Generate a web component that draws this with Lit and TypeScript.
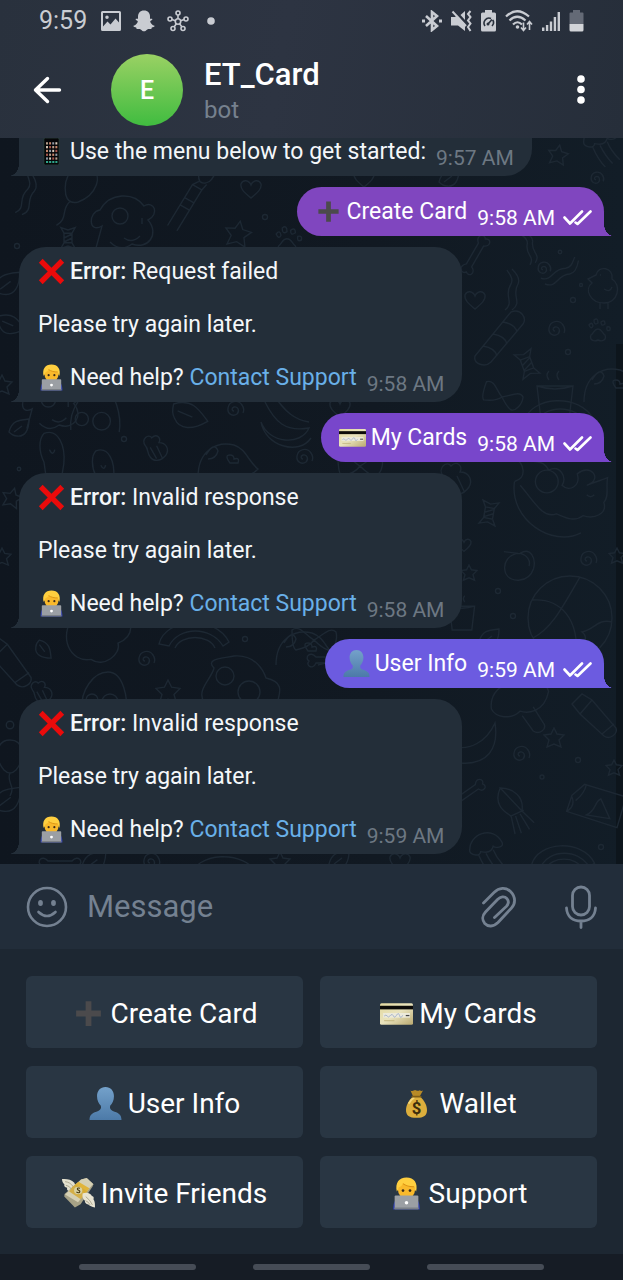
import { LitElement, html, svg, css, nothing, TemplateResult } from "lit";
import { customElement, property } from "lit/decorators.js";

type EmojiName = "plus" | "card" | "person" | "bag" | "money" | "tech" | "cross" | "phone";

const emojiArt: Record<EmojiName, TemplateResult> = {
  plus: svg`<path d="M13.200 4h5.600v9.200H28v5.600h-9.200V28h-5.600v-9.200H4v-5.600h9.200z" fill="#4b4a4c"/>`,
  cross: svg`<path d="M5.500 1 16 11.500 26.500 1 31 5.500 20.500 16 31 26.500 26.500 31 16 20.500 5.500 31 1 26.500 11.500 16 1 5.500z" fill="#ea0b0b"/>`,
  card: svg`
    <defs><linearGradient id="gold" x1="0" y1="0" x2="1" y2="1">
      <stop offset="0" stop-color="#e3d9a0"/><stop offset=".5" stop-color="#e9e3bd"/><stop offset="1" stop-color="#b9a970"/>
    </linearGradient></defs>
    <rect x="0" y="6" width="32" height="21" rx="1.500" fill="url(#gold)"/>
    <rect x="0" y="8.500" width="32" height="3.500" fill="#0c0b08"/>
    <rect x="3" y="15.500" width="26" height="4.500" fill="#eceadb"/>
    <path d="M4 18.500q2-2 3 0t3-.5 3 .3 3-.6 3 .4 3-.4" fill="none" stroke="#9aa9c8" stroke-width=".8"/>
    <path d="M25 18h3.500" stroke="#444" stroke-width="1.200"/>
    <path d="M4 23h10" stroke="#c3b67f" stroke-width="1"/>`,
  person: svg`
    <defs><linearGradient id="bust" x1="0" y1="0" x2="0" y2="1">
      <stop offset="0" stop-color="#74a1ca"/><stop offset="1" stop-color="#4c7aa8"/>
    </linearGradient></defs>
    <path d="M16 0c5 0 8.200 3.600 8.200 9 0 4-1.600 7.300-3.700 9.300-.6 2.600.4 4 2.500 4.900 5 1.800 8.500 2.800 8.500 8.800h-31c0-6 3.500-7 8.500-8.800 2.100-.9 3.100-2.300 2.500-4.900C9.400 16.300 7.800 13 7.800 9c0-5.400 3.200-9 8.200-9z" fill="url(#bust)"/>`,
  tech: svg`
    <path d="M3 31.500c0-7 2.500-10.500 6-12.500h14c3.500 2 6 5.500 6 12.500z" fill="#2f3fae"/>
    <ellipse cx="16" cy="12" rx="8.300" ry="9.500" fill="#f9b92b"/>
    <path d="M6.600 14C4.800 6 8.500.5 16 .5S27.200 6 25.400 14c-1-.8-1.500-2.500-2-4.600C19.500 9.500 15 8.500 12.500 6.500 11.500 8.500 9.600 9.600 8.600 10c-.3 1.600-.9 3.200-2 4z" fill="#ffcf3f"/>
    <path d="M12.500 6.500C15 8.500 19.500 9.500 23.400 9.400" fill="none" stroke="#d98f12" stroke-width="1"/>
    <circle cx="12.600" cy="13.200" r="1.300" fill="#3b2a1a"/><circle cx="19.400" cy="13.200" r="1.300" fill="#3b2a1a"/>
    <rect x="4.500" y="18" width="23" height="12.500" rx="1" fill="#9b9fa4"/>
    <rect x="4" y="29.500" width="24" height="2" rx="1" fill="#7b8087"/>
    <circle cx="16" cy="25" r="1.700" fill="#fff"/>`,
  bag: svg`
    <g transform="translate(1.600 2) scale(.9)">
      <path d="M9.500 1.500c2 1.200 3.500.2 5-.4 1.600 1 3.400 1 5 .1 1 .9 2.300 1 3.500.4l-3.800 6.600h-6.700z" fill="#b88a26"/>
      <path d="M12.500 8h7c4.500 3.500 7.800 9.500 7.800 14.500 0 6-3.300 8.500-11.300 8.500S4.700 28.500 4.700 22.500C4.700 17.500 8 11.500 12.500 8z" fill="#dcae3c"/>
      <path d="M8 15q2.500-4 5-5.500" stroke="#f4d67b" stroke-width="2" fill="none" stroke-linecap="round"/>
      <path d="M11.500 8.200h9" stroke="#7e5c17" stroke-width="1.800" stroke-linecap="round"/>
      <text x="16" y="27" text-anchor="middle" font-family="Roboto, sans-serif" font-weight="700" font-size="18" fill="#3c2d0c">$</text>
    </g>`,
  money: svg`
    <path d="M0 2c4-.3 9 0 12 3.500l2 6-6 3.500C5 13.500 4.500 12 5 10.500 2.500 10 1.800 8.400 2.300 7 .8 6 0 4 0 2z" fill="#e4e1cf"/>
    <path d="M3 4.500q5 .5 8 5M3.800 8q3.500.5 5.500 4" stroke="#a9a48d" stroke-width=".9" fill="none"/>
    <path d="M18.500 2.500 24 1l6.500 6-1 2.500-11.500 17-5.500 3L2.200 19l.3-2.500z" fill="#a7a286"/>
    <path d="M18.500 2.500 24 1l6.500 6-1 .6L15.500 24.500 3 17z" fill="#d5d0b4"/>
    <path d="m12 8 4-3.500L26.500 11l-3.800 5.500z" fill="#e0b43a"/>
    <path d="M10 9.500 13.500 7l11 7-6.300 7.500L7 14z" fill="#d4a935" opacity=".85"/>
    <ellipse cx="15.700" cy="13" rx="4" ry="3.500" fill="#d8d1a2"/>
    <path d="M17.500 11q-2.500-1-2.600.6c0 1.600 2.600.8 2.400 2.600-.2 1.500-2.300 1.200-3.300.2" stroke="#4c3d11" stroke-width="1.100" fill="none"/>
    <path d="M20 16c4-2 8 0 9 2.500 2 .5 2 2 1.500 3 1.500 2 1.500 5 1.500 8-3-.5-5-1.200-6.500-2.800-2.500-.5-3.500-2.200-3.300-3.700-2-1.500-2.800-4-2.200-7z" fill="#e8e4d2"/>
    <path d="M23 19q4 3 6.500 8M22.800 23q3 1 4.500 4" stroke="#a9a48d" stroke-width=".9" fill="none"/>`,
  phone: svg`
    <rect x="7" y="0" width="18" height="32" rx="1.500" fill="#050608" stroke="#2f4a41" stroke-width=".8"/>
    ${[5, 9.500, 14, 18.500, 23].map((y, r) =>
      [9.500, 13.200, 16.900, 20.600].map((x, c) => svg`<rect x=${x} y=${y} width="2.300" height="2.700" fill=${["#b9a08c", "#c9876a", "#8f9ba5", "#d8c9b8", "#a8584c"][(r * 3 + c) % 5]}/>`)
    )}
    <path d="M9.500 28.500h13.500" stroke="#2fa58a" stroke-width="2.400" stroke-dasharray="2.500 1.200"/>`,
};

const emojiLabels: Record<EmojiName, string> = {
  plus: "➕", card: "💳", person: "👤", bag: "💰", money: "💸", tech: "🧑‍💻", cross: "❌", phone: "📱",
};

@customElement("emoji-icon")
export class EmojiIcon extends LitElement {
  @property() name: EmojiName = "plus";
  static styles = css`
    :host { display: block; flex: none; }
    svg { display: block; width: 100%; height: 100%; }
  `;
  render() {
    return html`<svg viewBox="0 0 32 32" role="img" aria-label=${emojiLabels[this.name]}>${emojiArt[this.name]}</svg>`;
  }
}

const shapes = {
  spiral: "M0 1C-2 1-3-2 0-3c4-1 6 4 3 7-4 3-10 0-9-6 1-7 10-9 14-3 2 3 2 6 1 8",
  star: "M0-10 3-4 10-3 5 2 7 9 0 6-7 9-5 2-10-3-3-4z",
  heart: "M0 9C-6 4-11 0-10-5-8-10-2-9 0-4 2-9 8-10 10-5 11 0 6 4 0 9z",
  leaf: "M-11 4C-8-8 0-8 9-9 9 2 5 9-3 8-6 8-8 7-11 4zM-6 4 2-2",
  dot: "M2.500 0A2.500 2.500 0 1 1-2.500 0 2.500 2.500 0 1 1 2.500 0z",
  bone: "M-12-3C-18-10-24-2-19 1-23 6-15 10-12 3L12 3C15 10 23 6 19 1 24-2 18-10 12-3z",
  candy: "M-5-6h10v12H-5zM-5-6-9-13 0-10 9-13 5-6M-5 6-9 13 0 10 9 13 5 6M-5 0 5-5M-5 5 5 0",
  paw: "M0-1c4 0 4 4 7 6 2 5-3 7-7 5-4 2-9 0-7-5 3-2 3-6 7-6zM-9-5q3-4 4 1-2 4-4-1zM-4-10q4-3 4 3-4 3-4-3zM3-8q4-3 4 2-4 3-4-2zM9-3q4-1 3 3-4 2-3-3z",
  ribbon: "M-10 20C0 12-12 6-4-6-1-12-6-16-8-20M-3 20C8 12-4 6 3-6 6-12 0-18-3-21",
  acorn: "M-12-4C-18-12-8-20-4-14 2-20 8-14 5-8 14-8 18 0 14 7 8 16-2 16-6 10-10 6-8 0-12-4zM-6-2 2 12M2-4 9 11",
  peach: "M0-14C12-22 18-8 15 3 10 18-10 20-16 8-20-4-12-14 0-14zM0-14C8-12 12-6 10 0M-18-16-2-14",
  ball: "M42 0A42 42 0 1 1-42 0 42 42 0 1 1 42 0zM-38-18C-10-20 10 0 6 41M10-41C-8-10-18 10-37 20M42 4C28 0 24 12 12 14 20 20 10 26 20 37",
  squid: "M-4-24C-18-12-10 0-6 6L-10 24M-2 8-4 26M3 8 5 26M6 6 12 22M6 6C14-6 8-18-4-24zM-7 6H8",
  balloon: "M0-20C14-20 16-2 6 10 2 14-2 14-6 10-16-2-14-20 0-20zM0 13C-4 22 6 26 0 36",
  dog: "M-28 34-22 12C-36 20-36-2-24-4-14-22 10-22 20-8 30-14 36 0 24 6 36 20 24 36 8 30 0 36-8 34-14 28M4 2A8 8 0 1 1-12 2 8 8 0 1 1 4 2zM18 4v6M0 24q8 6 16-2",
  brush: "M8-40C-4-30-10-22-4-14 4-10 14-20 8-40zM-5-14-11-10-30 34M3-12-1-6-20 38M-11-10-1-6M-17 4-7 8M-20 12-10 16",
  cup: "M-18-14H18L14 20H-14zM-18-14Q0-8 18-14M-6-20q-4-5 0-9M4-20q-4-5 0-9",
  bow: "M0 0C-8-4-14-16-22-10-22-4-22 8-18 10-10 8-4 6 0 0zM0 0C8-4 16-14 22-8 24 0 20 10 14 10 8 8 4 4 0 0z",
  roll: "M-26 18 10-26C20-30 26-20 22-14L-10 24C-16 30-28 26-26 18zM-18 8q12 2 14 10M-8-4q12 2 14 10M2-16q12 2 14 10",
  chick: "M-6-12C-4-22 12-20 10-8 20-2 16 16 2 16-12 16-18 2-10-4L-14-8zM-2-12h1M2 2q6 4 8-2M-2 16v6M6 16v6",
  cat: "M-50-10C-56 30-10 60 20 44M-50-10C-36-14-40-30-50-34-30-30-20-34-14-22-2-28 6-14 0-6 8 2 20-6 16-18 30-30 44-12 26-6 36-10 44-12 48-14 46-4 50 6 44 12 48 24 34 30 22 26 12 34 0 26-6 24-20 30-30 10-44-6M-4-10A12 12 0 1 1-28-10 12 12 0 1 1-4-10zM26 4q4 4 8 0",
  banana: "M-20-20C-10 0 0 10 24 6 16 24-16 22-24 0M-24 0C-20 24 14 34 26 16M-12-28C0-10 10-2 24 0",
  pig: "M-28 20C-28-6-10-16 8-12 20-8 22 4 32 12 26 18 22 18 14 20M-20-2q8-14 12-4-2 8-10 8M4 6q-6-8 0-8 4 0 4 4 6-2 4 4z",
  sheep: "M-36 24C-44 12-28 0-26-10-36-20-14-20-6-22 16-24 24-6 26 0 44 4 40 14 38 22M-6-2A9 9 0 1 1-24-2 9 9 0 1 1-6-2zM20 14A11 11 0 1 1-2 14 11 11 0 1 1 20 14z",
  robot: "M-22 20C-24 0-10-18 4-18 20-18 24 10 22 22M-6 10A6 6 0 1 1-18 10 6 6 0 1 1-6 10zM14 12A8 8 0 1 1-2 12 8 8 0 1 1 14 12z",
  cloud: "M-30-20C-46 0-34 30-10 26 4 36 24 20 20 8 40 0 36-20 26-26",
  moon: "M18-22C22 4 10 20-16 18-26 16-30 8-28 0-8 8 10-4 18-22z",
  torch: "M-22-12-12-22-2-16 22 12C24 18 16 24 10 20L-14-2zM-14-2-2-16M8 18 20 8",
  gift: "M-20-12-6-24 40-10 30 24-26 6zM-16-6q10-8 12-18M-4 10C8 4 4-4 12-8L22 14zM-26 6q10-6 6-16",
  melon: "M-36 10C-30-16 20-20 34 8L28 12C16-8-16-8-26 12zM-20 14C-14 0 14 0 20 14",
  jelly: "M-18 4C-20-16 8-26 18-6 20 0 10 0 8-2 6 8-4 4-6 4-6 10-16 8-18 4zM-8 8Q-2 22 6 30M0 6Q6 18 14 26M8 2Q12 12 22 22",
  ice: "M-26 10C-30-20 22-24 26-6 22 14 6 14 0 12-8 20-22 18-26 10zM2 16 12 30C18 34 24 28 22 24L12 8",
  popsicle: "M-10-24C6-30 14-10 12 10L10 22H-8L-10 8C-16-4-16-18-10-24zM-4-6q4 8 6 0",
};

type Stamp = [keyof typeof shapes, number, number, number?, number?];

const stamps: Stamp[] = [
  ["balloon", 78, 188, 1.2, 30], ["ribbon", 30, 196, 1, 15], ["dog", 124, 214], ["brush", 202, 196, 1, 8], ["heart", 251, 189], ["star", 238, 234, 1.3, 10],
  ["dot", 265, 217], ["dot", 17, 246], ["candy", 68, 238, .8], ["paw", 287, 240, 1.2], ["star", 558, 155, 1, 10], ["jelly", 600, 140, .9], ["spiral", 596, 179, .8],
  ["heart", 364, 178], ["leaf", 450, 178], ["leaf", 8, 284, 1.3], ["leaf", 10, 325, 1.2, 60], ["star", 2, 385], ["bone", 475, 255, 1, -60],
  ["ribbon", 532, 247, .8, -20], ["ribbon", 563, 275, 1, 55], ["spiral", 543, 269, .8], ["ribbon", 515, 290], ["chick", 602, 287], ["heart", 475, 300], ["roll", 501, 338],
  ["dot", 560, 252, .7], ["dot", 573, 300], ["dot", 581, 285, .6], ["spiral", 555, 330], ["paw", 598, 330], ["candy", 527, 364, 1, -20], ["dot", 568, 352], ["bow", 502, 397, .9, 20],
  ["cup", 555, 400], ["pig", 612, 382], ["dog", 52, 398, .9], ["leaf", 20, 428], ["popsicle", 53, 455, .9], ["popsicle", 104, 470, .8], ["acorn", 155, 449, .8], ["dot", 124, 439],
  ["dot", 19, 469, .7], ["pig", 226, 457], ["spiral", 234, 410], ["spiral", 303, 458], ["banana", 285, 422], ["leaf", 188, 416, 1.6, 60], ["star", 12, 498, 1, 15], ["star", 2, 557, .9],
  ["robot", 95, 408, 1.1], ["heart", 340, 408], ["melon", 560, 412], ["bow", 360, 466], ["acorn", 455, 480], ["cat", 562, 491, .95], ["candy", 489, 513, .9, 10],
  ["peach", 520, 566, .9], ["spiral", 587, 560], ["star", 469, 573, .8], ["dot", 498, 591], ["dot", 513, 616], ["heart", 464, 545, .7], ["ball", 570, 618],
  ["cup", 462, 616, .7], ["leaf", 490, 638], ["star", 617, 556, .8], ["leaf", 43, 650, .9, 90], ["torch", 8, 662, 1.1, 5], ["cloud", 100, 636, .9], ["spiral", 145, 660], ["robot", 104, 690],
  ["star", 168, 692, 1.2], ["sheep", 240, 678], ["dot", 245, 639], ["acorn", 41, 693, .7], ["melon", 195, 634], ["pig", 304, 645], ["dot", 10, 725, 1.5], ["balloon", 10, 760],
  ["leaf", 8, 800, 1.4], ["bone", 328, 660], ["bow", 314, 640], ["ice", 520, 698, 1.1], ["torch", 594, 716], ["star", 554, 738], ["spiral", 520, 755], ["moon", 477, 745], ["bone", 468, 793, .9, -35],
  ["dot", 578, 760], ["dot", 542, 777, .8], ["star", 614, 768, .8], ["squid", 514, 808, 1, -25], ["gift", 590, 806, .9], ["jelly", 486, 848, .9], ["melon", 564, 856, .9],
  ["dot", 601, 847], ["heart", 400, 862], ["leaf", 340, 860], ["leaf", 95, 862, 1.2], ["melon", 225, 868], ["spiral", 150, 862], ["bone", 60, 864], ["star", 280, 862],
];

const wallpaper = svg`
  <rect x="616" y="344" width="7" height="520" fill="#0d151c" stroke="none"/>
  ${stamps.map(([kind, x, y, s = 1, r = 0]) =>
    svg`<path d=${shapes[kind]} transform="translate(${x} ${y}) rotate(${r}) scale(${s})" vector-effect="non-scaling-stroke"/>`)}`;

interface Message {
  out?: boolean;
  tone?: string;
  emoji: EmojiName;
  text: string;
  help?: boolean;
  clipped?: boolean;
  time: string;
}

@customElement("chat-bubble")
export class ChatBubble extends LitElement {
  @property({ attribute: false }) message!: Message;
  static styles = css`
    :host { display: flex; flex: none; }
    .bubble {
      position: relative;
      display: flex;
      align-items: flex-end;
      gap: 10px;
      padding: 11px 18px 6px 19px;
      border-radius: 27px 27px 27px 0;
      background: #232e39;
      color: #f4f7fa;
      font-size: 23px;
      line-height: 27px;
    }
    .bubble::after {
      content: "";
      position: absolute;
      bottom: 0;
      left: -10px;
      width: 10px;
      height: 12px;
      background: radial-gradient(10px 12px at 0 0, transparent 97%, #232e39);
    }
    .clipped { padding-top: 48px; }
    .out { margin-left: auto; padding: 11px 12px 6px 18px; border-radius: 25px 25px 0 25px; background: var(--tone); color: #fff; }
    .out::after { left: auto; right: -9px; width: 9px; background: radial-gradient(9px 12px at 100% 0, transparent 97%, var(--tone)); }
    .violet { --tone: #8046bf; }
    .purple { --tone: #7846cb; }
    .indigo { --tone: #6c5be0; }
    .body { display: flex; flex-direction: column; gap: 26px; padding-bottom: 5px; }
    .line { display: flex; align-items: center; margin: 0; gap: 5px; white-space: nowrap; }
    .emoji { width: 27px; height: 27px; }
    b { font-weight: 500; }
    a { color: #69b0e8; text-decoration: none; }
    .meta { display: flex; align-items: center; gap: 8px; color: #6d7883; font-size: 21px; line-height: 24px; white-space: nowrap; }
    .out .meta { color: #fff; }
    .ticks { width: 29px; height: 16px; }
  `;
  render() {
    const m = this.message;
    const kind = m.out ? `out ${m.tone}` : m.clipped ? "clipped" : "";
    const icon = html`<emoji-icon class="emoji" name=${m.emoji}></emoji-icon>`;
    return html`<div class="bubble ${kind}">
      <div class="body">
        <p class="line">${icon}<span>${m.help ? html`<b>Error:</b> ` : nothing}${m.text}</span></p>
        ${m.help ? html`
          <p class="line">Please try again later.</p>
          <p class="line"><emoji-icon class="emoji" name="tech"></emoji-icon><span>Need help? <a href="#support">Contact Support</a></span></p>` : nothing}
      </div>
      <div class="meta"><time>${m.time}</time>
        ${m.out ? html`<svg class="ticks" viewBox="0 0 29 16" fill="none" stroke="#fff" stroke-width="2.600" stroke-linecap="round" stroke-linejoin="round" aria-hidden="true"><path d="M1.500 7.500l5.500 6L19 1.500M12.500 12.500l2 1.500L27.500 1.500"/></svg>` : nothing}
      </div>
    </div>`;
  }
}

@customElement("app-root")
export class AppRoot extends LitElement {
  static styles = css`
    :host { display: block; font-family: Roboto, "Noto Sans", sans-serif; }
    .screen { display: flex; flex-direction: column; height: 100vh; background: #10171f; }
    svg { display: block; flex: none; }
    button { margin: 0; padding: 0; border: 0; background: none; color: inherit; font: inherit; cursor: pointer; }
    .top { background: linear-gradient(100deg, #29313d, #2d3442 45%, #262e3a); flex: none; }
    .status { display: flex; align-items: center; justify-content: space-between; height: 42px; padding: 0 39px; color: #c9ccd2; font-size: 25px; line-height: 42px; }
    .group { display: flex; align-items: center; gap: 12px; }
    .clock { margin-right: 2px; }
    .signals { gap: 9px; }
    .header { display: flex; align-items: center; height: 96px; padding: 0 33px; color: #fff; }
    .avatar { display: grid; place-items: center; flex: none; width: 72px; height: 72px; margin: 0 21px 0 48px; border-radius: 50%; background: linear-gradient(#9ad164, #40bc40); font-size: 25px; font-weight: 500; }
    .who { flex: 1; padding-top: 3px; }
    h1 { margin: 0; font-size: 31px; line-height: 36px; font-weight: 500; }
    .who p { margin: 0; color: #76818e; font-size: 24px; line-height: 34px; }
    .chat { position: relative; display: flex; flex: 1; flex-direction: column; justify-content: flex-end; gap: 11px; min-height: 0; padding: 0 19px 10px; overflow: hidden; background: linear-gradient(90deg, #0f161f, #111922 60%, #121d27); }
    .wallpaper { position: absolute; inset: 0; width: 100%; height: 100%; fill: none; stroke: #1d2833; stroke-width: 1.4px; }
    .composer { display: flex; align-items: center; flex: none; height: 85px; padding: 0 26px; background: #222d3a; color: #748191; }
    input { flex: 1; min-width: 0; margin: 0 19px; padding: 0; border: 0; outline: 0; background: none; color: #fff; font: inherit; font-size: 31px; line-height: 40px; }
    input::placeholder { color: #748191; opacity: 1; }
    .tools { display: flex; align-items: center; gap: 48px; }
    .keys { display: grid; grid-template-columns: 1fr 1fr; gap: 18px 17px; flex: none; padding: 27px 26px 26px; background: #1d2732; }
    .key { display: flex; align-items: center; justify-content: center; gap: 6px; height: 72px; padding-top: 3px; border-radius: 6px; background: #293643; color: #fff; font-size: 28px; line-height: 34px; }
    .emoji { width: 33px; height: 33px; }
    .nav { display: flex; align-items: center; justify-content: center; gap: 57px; flex: none; height: 26px; background: #161c25; }
    .pill { width: 117px; height: 6px; border-radius: 3px; background: #464c56; }
  `;

  private messages: Message[] = [
    { emoji: "phone", text: "Use the menu below to get started:", time: "9:57 AM", clipped: true },
    { out: true, tone: "violet", emoji: "plus", text: "Create Card", time: "9:58 AM" },
    { emoji: "cross", text: "Request failed", help: true, time: "9:58 AM" },
    { out: true, tone: "purple", emoji: "card", text: "My Cards", time: "9:58 AM" },
    { emoji: "cross", text: "Invalid response", help: true, time: "9:58 AM" },
    { out: true, tone: "indigo", emoji: "person", text: "User Info", time: "9:59 AM" },
    { emoji: "cross", text: "Invalid response", help: true, time: "9:59 AM" },
  ];

  private keys: [EmojiName, string][] = [
    ["plus", "Create Card"], ["card", "My Cards"], ["person", "User Info"],
    ["bag", "Wallet"], ["money", "Invite Friends"], ["tech", "Support"],
  ];

  private statusIcons() {
    return html`<div class="group signals" aria-hidden="true">
      <svg width="20" height="22" viewBox="0 0 20 22" fill="none" stroke="#c9ccd2" stroke-width="2.600"><path d="M4 6l11 10-5 4V2l5 4L4 16"/><path d="M0 11h3M17 11h3" stroke-width="2.800"/></svg>
      <svg width="21" height="22" viewBox="0 0 21 22"><path d="M0 7h4l2-1.500L14 14v7l-7-5.500H0zM14 1v9L9.500 5z" fill="#c9ccd2"/><path d="M1.500 1.500 15 16" stroke="#c9ccd2" stroke-width="2"/><path d="M19.500 1l-2.500 3 2.500 3-2.500 3.500 2.500 3-2.500 3.500 2.500 4" fill="none" stroke="#c9ccd2" stroke-width="2"/></svg>
      <svg width="15" height="22" viewBox="0 0 15 22"><path d="M4 0h7v2.500h2.500q1.500 0 1.500 1.500v16q0 1.500-1.500 1.500h-12Q0 21.500 0 20V4q0-1.500 1.500-1.500H4z" fill="#c9ccd2"/><path d="M4 16a5 5 0 0 1 6-7.500M11.800 10a5 5 0 0 1-.8 6M7 14l4-4.500" fill="none" stroke="#29313d" stroke-width="1.600"/><circle cx="7" cy="14" r="1.500" fill="#29313d"/></svg>
      <svg width="28" height="22" viewBox="0 0 28 22" fill="none" stroke="#c9ccd2" stroke-width="2.200"><path d="M1 6.500Q12-4 24 6.500M4.500 10.500Q12 3 20.500 10.500M8 14.500q4.500-4.500 9 0"/><circle cx="12.500" cy="17" r="1.800" fill="#c9ccd2" stroke="none"/><path d="M18.500 12.500V20M16 17.500l2.500 3 2.500-3M24.500 20v-8M22 14.500l2.500-3 2.500 3" stroke-width="1.600"/></svg>
      <svg width="18" height="22" viewBox="0 0 18 22" fill="#c9ccd2"><path d="M0 17.500h2.400V21H0zM3.900 15h2.400v6H3.900zM7.800 11.500h2.400V21H7.800zM11.700 7h2.400v14h-2.400zM15.600 2H18v19h-2.400z"/></svg>
      <svg width="15" height="22" viewBox="0 0 15 22"><path d="M4 0h7v2.500h2.500q1 0 1 1V14H.5V3.500q0-1 1-1H4z" fill="#646a76"/><path d="M.5 14h14v6q0 1.500-1.500 1.500H2Q.5 21.500.5 20z" fill="#d2d4d8"/></svg>
    </div>`;
  }

  render() {
    return html`<div class="screen">
      <div class="top">
        <div class="status">
          <div class="group"><time class="clock">9:59</time>
            <svg width="20" height="20" viewBox="0 0 20 20" aria-hidden="true"><path fill="#c9ccd2" fill-rule="evenodd" d="M1.500 0h17Q20 0 20 1.500v17q0 1.500-1.500 1.500h-17Q0 20 0 18.500v-17Q0 0 1.500 0zM2 2v13.500l4.500-5 3 3 5-6 3.500 4V2zM6 4.500A1.700 1.700 0 1 1 6 8a1.700 1.700 0 0 1 0-3.500z"/></svg>
            <svg width="22" height="22" viewBox="0 0 22 22" aria-hidden="true"><path fill="#c9ccd2" d="M11 .5c4 0 6 2.700 6 6v2.300c1 .2 1.800-.5 2.300.1.600 1-1.300 1.500-2 2.200-.4 1.700 2 4.100 4.200 4.700.8.700-1.500 1.600-2.700 1.800-.3.600-.1 1.300-.7 1.500-1.200.1-2.500-.4-3.800.3-1 .7-1.800 1.900-3.300 1.900s-2.300-1.200-3.300-1.900c-1.300-.7-2.600-.2-3.800-.3-.6-.2-.4-.9-.7-1.500-1.200-.2-3.500-1.100-2.700-1.800 2.200-.6 4.600-3 4.200-4.700-.7-.7-2.600-1.200-2-2.200.5-.6 1.300.1 2.300-.1V6.500c0-3.300 2-6 6-6z"/></svg>
            <svg width="22" height="22" viewBox="0 0 22 22" fill="none" stroke="#c9ccd2" stroke-width="1.600" aria-hidden="true"><circle cx="11" cy="11.500" r="2.700"/><circle cx="11" cy="3" r="2"/><circle cx="3" cy="9" r="2"/><circle cx="19" cy="9" r="2"/><circle cx="6" cy="18.500" r="2"/><circle cx="16" cy="18.500" r="2"/><path d="M11 5v3.800M5 9.600l3.400 1.100M17 9.600l-3.400 1.100M7.200 16.800l2.200-3M14.800 16.800l-2.200-3"/></svg>
            <svg width="20" height="20" viewBox="0 0 20 20" aria-hidden="true"><circle cx="10" cy="10" r="3.800" fill="#c9ccd2"/></svg>
          </div>
          ${this.statusIcons()}
        </div>
        <header class="header">
          <button aria-label="Back"><svg width="30" height="28" viewBox="0 0 30 28" fill="none" stroke="#fff" stroke-width="3.400" stroke-linecap="round" stroke-linejoin="round"><path d="M26.500 14H2.500M14.500 2.500 2.500 14l12 11.500"/></svg></button>
          <div class="avatar">E</div>
          <div class="who"><h1>ET_Card</h1><p>bot</p></div>
          <button aria-label="More options"><svg width="18" height="30" viewBox="0 0 18 30" fill="#fff"><circle cx="9" cy="4" r="3.800"/><circle cx="9" cy="14.500" r="3.800"/><circle cx="9" cy="25" r="3.800"/></svg></button>
        </header>
      </div>
      <main class="chat">
        <svg class="wallpaper" viewBox="0 138 623 726" preserveAspectRatio="xMidYMax slice" aria-hidden="true">${wallpaper}</svg>
        ${this.messages.map((m) => html`<chat-bubble .message=${m}></chat-bubble>`)}
      </main>
      <div class="composer">
        <button aria-label="Emoji"><svg width="42" height="42" viewBox="0 0 42 42" fill="none" stroke="#748191" stroke-width="2.600" stroke-linecap="round"><circle cx="21" cy="21" r="19"/><path d="M12.500 26q8.500 8 17 0"/><ellipse cx="14.500" cy="17" rx="2.400" ry="3" fill="#748191" stroke="none"/><ellipse cx="27.500" cy="17" rx="2.400" ry="3" fill="#748191" stroke="none"/></svg></button>
        <input type="text" placeholder="Message" aria-label="Message" />
        <div class="tools">
          <button aria-label="Attach file"><svg width="36" height="42" viewBox="0 0 36 42" fill="none" stroke="#748191" stroke-width="2.800" stroke-linecap="round" stroke-linejoin="round"><path d="M2.500 17 13 6.500C18 1.500 25 1 29.500 5.500 35 11 34.500 18 30.500 22L17 36.500C12.500 41 7 41 3.800 37.500.8 34 1.200 29.500 4.500 26L16.500 13.500C19.500 10.500 23.500 10 25.800 12.500 28 15 27.500 18 25.500 20.200L13.500 31.500"/></svg></button>
          <button aria-label="Record voice message"><svg width="32" height="44" viewBox="0 0 32 44" fill="none" stroke="#748191" stroke-width="2.800" stroke-linecap="round"><rect x="7.500" y="2" width="17" height="28" rx="8.500"/><path d="M1.500 23C2 32 8 36 16 36s14-4 14.500-13M16 36v6.500"/></svg></button>
        </div>
      </div>
      <div class="keys">
        ${this.keys.map(([emoji, label]) => html`<button class="key"><emoji-icon class="emoji" name=${emoji}></emoji-icon><span>${label}</span></button>`)}
      </div>
      <div class="nav"><div class="pill"></div><div class="pill"></div><div class="pill"></div></div>
    </div>`;
  }
}
